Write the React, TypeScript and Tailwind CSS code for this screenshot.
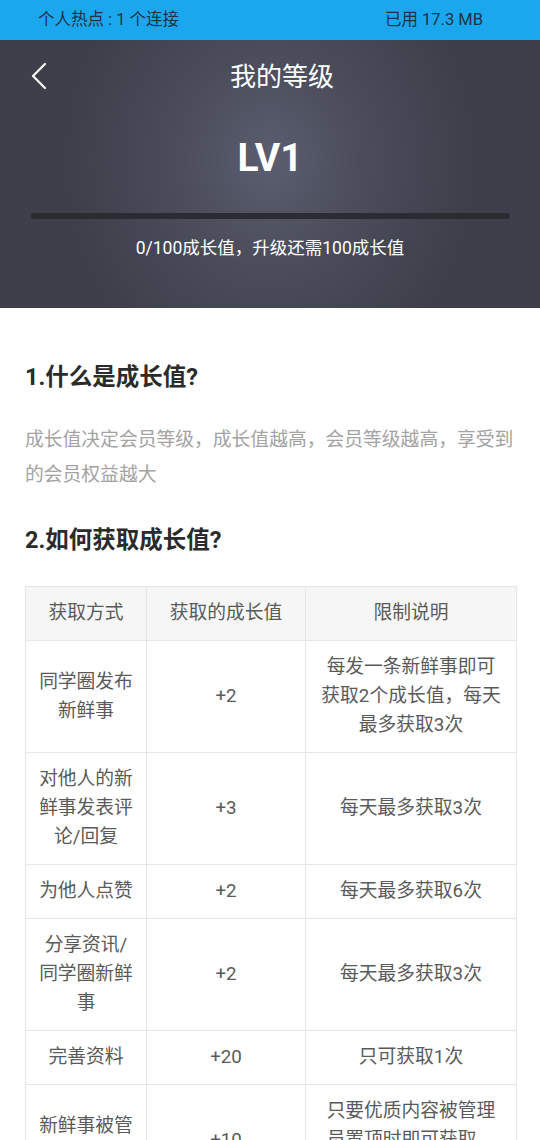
import React from 'react';

const rows: { way: string[]; value: string; note: string[] }[] = [
  { way: ['同学圈发布', '新鲜事'], value: '+2', note: ['每发一条新鲜事即可', '获取2个成长值，每天', '最多获取3次'] },
  { way: ['对他人的新', '鲜事发表评', '论/回复'], value: '+3', note: ['每天最多获取3次'] },
  { way: ['为他人点赞'], value: '+2', note: ['每天最多获取6次'] },
  { way: ['分享资讯/', '同学圈新鲜', '事'], value: '+2', note: ['每天最多获取3次'] },
  { way: ['完善资料'], value: '+20', note: ['只可获取1次'] },
  { way: ['新鲜事被管', '理员置顶'], value: '+10', note: ['只要优质内容被管理', '员置顶时即可获取，', '每条只可获取1次'] },
];

const Lines = ({ lines }: { lines: string[] }) => (
  <>
    {lines.map((l, i) => (
      <div key={i}>{l}</div>
    ))}
  </>
);

export default function App() {
  return (
    <div
      className="w-[540px] h-[1140px] bg-white overflow-hidden"
      style={{ fontFamily: 'Roboto, "Noto Sans CJK SC", sans-serif' }}
    >
      {/* status bar */}
      <div className="h-[40px] bg-[#1ba7ee] flex items-center justify-between pl-[38px] pr-[57px] text-[16.5px] text-[#1c3348]">
        <span>个人热点 : 1 个连接</span>
        <span>已用 17.3 MB</span>
      </div>

      {/* level header */}
      <div className="h-[268px] flex flex-col items-center bg-[radial-gradient(ellipse_200px_230px_at_50%_45%,#5b5e70_0%,#4b4d5b_45%,#3e3f4b_100%)]">
        <div className="relative w-full h-[74px] flex items-center justify-center">
          <svg className="absolute left-[30px] top-[22px]" width="18" height="28" viewBox="0 0 18 28">
            <path d="M15 2 L3 14 L15 26" fill="none" stroke="#fff" strokeWidth="2.2" strokeLinecap="round" strokeLinejoin="round" />
          </svg>
          <span className="pl-[24px] text-[26px] text-white">我的等级</span>
        </div>
        <div className="mt-[20px] h-[48px] leading-[48px] text-[39px] font-bold text-white">LV1</div>
        <div className="mt-[31px] w-[479px] h-[6px] rounded-full bg-[#2b2c31]" />
        <div className="mt-[17px] h-[24px] leading-[24px] text-[17.5px] text-white">0/100成长值，升级还需100成长值</div>
      </div>

      {/* content */}
      <div className="pl-[25px] pr-[24px]">
        <h2 className="mt-[53px] leading-[33px] text-[23.5px] font-bold text-[#2b2b2b]">1.什么是成长值?</h2>
        <p className="mt-[29px] leading-[35px] text-[18.8px] text-[#a3a3a3]">
          成长值决定会员等级，成长值越高，会员等级越高，享受到
          <br />
          的会员权益越大
        </p>
        <h2 className="mt-[31px] leading-[33px] text-[23.5px] font-bold text-[#2b2b2b]">2.如何获取成长值?</h2>

        <table className="mt-[29px] w-[491px] table-fixed border-collapse text-[18.75px] leading-[29px] text-[#5a5a5a]">
          <colgroup>
            <col className="w-[121px]" />
            <col className="w-[159px]" />
            <col className="w-[211px]" />
          </colgroup>
          <thead>
            <tr className="bg-[#f6f6f6]">
              <th className="border border-[#e6e6e6] py-[12px] font-normal text-center">获取方式</th>
              <th className="border border-[#e6e6e6] py-[12px] font-normal text-center">获取的成长值</th>
              <th className="border border-[#e6e6e6] py-[12px] font-normal text-center">限制说明</th>
            </tr>
          </thead>
          <tbody>
            {rows.map((r, i) => (
              <tr key={i}>
                <td className="border border-[#e6e6e6] py-[12px] text-center align-middle">
                  <Lines lines={r.way} />
                </td>
                <td className="border border-[#e6e6e6] py-[12px] text-center align-middle">{r.value}</td>
                <td className="border border-[#e6e6e6] py-[12px] text-center align-middle">
                  <Lines lines={r.note} />
                </td>
              </tr>
            ))}
          </tbody>
        </table>
      </div>
    </div>
  );
}
